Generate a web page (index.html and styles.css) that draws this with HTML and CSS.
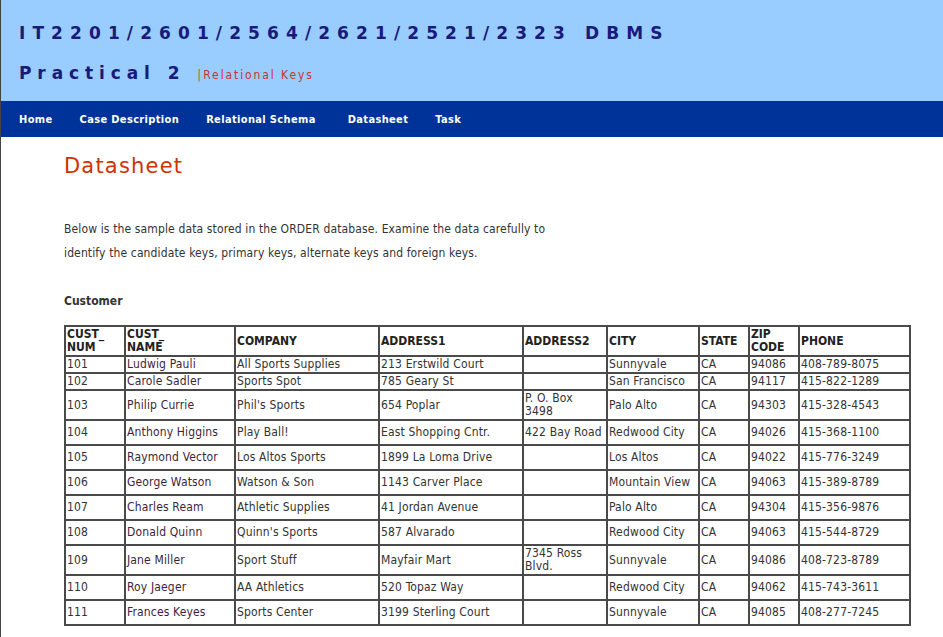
FILE: index.html
```html
<!DOCTYPE html>
<html>
<head>
<meta charset="utf-8">
<title>Datasheet</title>
<link rel="stylesheet" href="styles.css">
</head>
<body>
<div class="page">
  <header class="header">
    <h1 class="title">IT2201/2601/2564/2621/2521/2323 DBMS</h1>
    <h2 class="subtitle">Practical 2 <span class="sub-bar">|</span><span class="sub-text">Relational Keys</span></h2>
  </header>
  <nav class="nav">
    <a class="nav-link l-home">Home</a>
    <a class="nav-link l-case">Case Description</a>
    <a class="nav-link l-schema">Relational Schema</a>
    <a class="nav-link l-data">Datasheet</a>
    <a class="nav-link l-task">Task</a>
  </nav>
  <main class="main">
    <h3 class="heading">Datasheet</h3>
    <p class="intro">Below is the sample data stored in the ORDER database. Examine the data carefully to<br>identify the candidate keys, primary keys, alternate keys and foreign keys.</p>
    <p class="caption">Customer</p>
    <table class="data">
      <colgroup>
        <col class="c1"><col class="c2"><col class="c3"><col class="c4"><col class="c5"><col class="c6"><col class="c7"><col class="c8"><col class="c9">
      </colgroup>
      <tr class="r-head"><th>CUST_<br>NUM</th><th>CUST_<br>NAME</th><th>COMPANY</th><th>ADDRESS1</th><th>ADDRESS2</th><th>CITY</th><th>STATE</th><th>ZIP<br>CODE</th><th>PHONE</th></tr>
      <tr class="r-s"><td>101</td><td>Ludwig Pauli</td><td>All Sports Supplies</td><td>213 Erstwild Court</td><td></td><td>Sunnyvale</td><td>CA</td><td>94086</td><td>408-789-8075</td></tr>
      <tr class="r-s"><td>102</td><td>Carole Sadler</td><td>Sports Spot</td><td>785 Geary St</td><td></td><td>San Francisco</td><td>CA</td><td>94117</td><td>415-822-1289</td></tr>
      <tr class="r-t"><td>103</td><td>Philip Currie</td><td>Phil's Sports</td><td>654 Poplar</td><td>P. O. Box<br>3498</td><td>Palo Alto</td><td>CA</td><td>94303</td><td>415-328-4543</td></tr>
      <tr class="r-m"><td>104</td><td>Anthony Higgins</td><td>Play Ball!</td><td>East Shopping Cntr.</td><td>422 Bay Road</td><td>Redwood City</td><td>CA</td><td>94026</td><td>415-368-1100</td></tr>
      <tr class="r-m"><td>105</td><td>Raymond Vector</td><td>Los Altos Sports</td><td>1899 La Loma Drive</td><td></td><td>Los Altos</td><td>CA</td><td>94022</td><td>415-776-3249</td></tr>
      <tr class="r-m"><td>106</td><td>George Watson</td><td>Watson &amp; Son</td><td>1143 Carver Place</td><td></td><td>Mountain View</td><td>CA</td><td>94063</td><td>415-389-8789</td></tr>
      <tr class="r-m"><td>107</td><td>Charles Ream</td><td>Athletic Supplies</td><td>41 Jordan Avenue</td><td></td><td>Palo Alto</td><td>CA</td><td>94304</td><td>415-356-9876</td></tr>
      <tr class="r-m"><td>108</td><td>Donald Quinn</td><td>Quinn's Sports</td><td>587 Alvarado</td><td></td><td>Redwood City</td><td>CA</td><td>94063</td><td>415-544-8729</td></tr>
      <tr class="r-t"><td>109</td><td>Jane Miller</td><td>Sport Stuff</td><td>Mayfair Mart</td><td>7345 Ross<br>Blvd.</td><td>Sunnyvale</td><td>CA</td><td>94086</td><td>408-723-8789</td></tr>
      <tr class="r-m"><td>110</td><td>Roy Jaeger</td><td>AA Athletics</td><td>520 Topaz Way</td><td></td><td>Redwood City</td><td>CA</td><td>94062</td><td>415-743-3611</td></tr>
      <tr class="r-m"><td>111</td><td>Frances Keyes</td><td>Sports Center</td><td>3199 Sterling Court</td><td></td><td>Sunnyvale</td><td>CA</td><td>94085</td><td>408-277-7245</td></tr>
    </table>
  </main>
</div>
</body>
</html>
```

FILE: styles.css
```css
html, body {
  margin: 0;
  padding: 0;
  background: #ffffff;
}
body {
  font-family: "DejaVu Sans Condensed", "DejaVu Sans", sans-serif;
  color: #333333;
}
.page {
  min-height: 637px;
  border-left: 1px solid #444444;
  box-sizing: border-box;
}
.header {
  background: #99ccff;
  height: 101px;
  box-sizing: border-box;
  padding: 20px 0 0 18px;
}
.title {
  margin: 0;
  font-family: "DejaVu Sans", sans-serif;
  font-size: 17px;
  font-weight: bold;
  letter-spacing: 7.1px;
  line-height: 26px;
  color: #1a1a7a;
}
.subtitle {
  margin: 14px 0 0 0;
  font-family: "DejaVu Sans", sans-serif;
  font-size: 17px;
  font-weight: bold;
  letter-spacing: 5.9px;
  line-height: 26px;
  color: #1a1a7a;
}
.sub-bar {
  font-weight: normal;
  font-size: 12px;
  letter-spacing: 2px;
  color: #cc6600;
}
.sub-text {
  font-family: "DejaVu Sans Condensed", "DejaVu Sans", sans-serif;
  font-weight: normal;
  font-size: 12px;
  letter-spacing: 1.9px;
  color: #cc3333;
}
.nav {
  background: #003399;
  height: 36px;
  display: flex;
  align-items: center;
  padding-left: 18px;
}
.nav-link {
  color: #ffffff;
  font-weight: bold;
  font-size: 11px;
  letter-spacing: 0.35px;
  text-decoration: none;
}
.l-home { margin-right: 27px; }
.l-case { margin-right: 27px; }
.l-schema { margin-right: 32px; }
.l-data { margin-right: 27px; }
.main {
  padding: 14px 0 12px 63px;
}
.heading {
  margin: 0;
  font-family: "DejaVu Sans", sans-serif;
  font-weight: normal;
  font-size: 21px;
  letter-spacing: 1.2px;
  line-height: 30px;
  color: #cc3300;
}
.intro {
  margin: 36px 0 0 0;
  font-size: 12px;
  letter-spacing: 0.13px;
  line-height: 24px;
  color: #333333;
}
.caption {
  margin: 24px 0 0 0;
  font-size: 12px;
  font-weight: bold;
  line-height: 24px;
  color: #333333;
}
.data {
  margin-top: 12px;
  border-collapse: collapse;
  border: 2px solid #4a4a4a;
  font-size: 12px;
  width: 845px;
  table-layout: fixed;
}
.data th, .data td {
  border: 2px solid #4a4a4a;
  padding: 0 1px;
  text-align: left;
  vertical-align: middle;
  line-height: 13px;
  letter-spacing: 0.15px;
  color: #333333;
}
.data th {
  font-weight: bold;
  letter-spacing: 0;
  color: #222222;
}
.data td:nth-child(2) { color: #3d1f3d; }
.c1 { width: 60px; }
.c2 { width: 110px; }
.c3 { width: 144px; }
.c4 { width: 144px; }
.c5 { width: 84px; }
.c6 { width: 92px; }
.c7 { width: 50px; }
.c8 { width: 50px; }
.c9 { width: 111px; }
.r-head { height: 30px; }
.r-s { height: 17px; }
.r-t { height: 30px; }
.r-m { height: 25px; }
```
